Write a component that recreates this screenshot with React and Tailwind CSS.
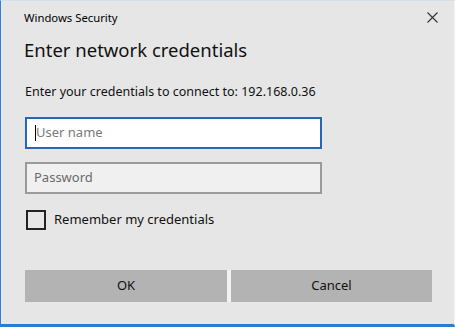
export default function App() {
  const font = { fontFamily: '"Noto Sans", "Open Sans", sans-serif' };
  return (
    <div
      className="w-[455px] h-[327px] bg-[#e6e6e6] border-l border-l-[#2f80d6] border-t border-t-[#cfe0f0] border-b-[3px] border-b-[#2b7bd2] border-r border-r-[#f4f4f4] flex flex-col text-[#1a1a1a]"
      style={font}
    >
      <div className="flex items-center justify-between h-[33px] pl-[23px] pr-[16px]">
        <span className="text-[11.3px] leading-none text-black">Windows Security</span>
        <svg width="11" height="11" viewBox="0 0 11 11" className="text-[#333]">
          <path d="M0.5 0.5 L10.5 10.5 M10.5 0.5 L0.5 10.5" stroke="currentColor" strokeWidth="1.1" fill="none" />
        </svg>
      </div>
      <div className="pl-[23px] text-[18.5px] leading-[30px] text-[#111] mt-[1px]">Enter network credentials</div>
      <div className="pl-[24px] mt-[18px] text-[12.5px] leading-[18px] text-[#111]">
        Enter your credentials to connect to: 192.168.0.36
      </div>
      <div className="pl-[24px] mt-[16px] flex flex-col">
        <div className="w-[297px] h-[32px] bg-white border-2 border-[#2a66b8] flex items-center pl-[8px]">
          <span className="w-[1px] h-[16px] bg-black"></span>
          <span className="text-[13px] text-[#7a7a7a]">User name</span>
        </div>
        <div className="w-[297px] h-[32px] mt-[13px] bg-[#f0f0f0] border-2 border-[#9a9a9a] flex items-center pl-[7px]">
          <span className="text-[13px] text-[#6a6a6a]">Password</span>
        </div>
        <div className="flex items-center mt-[16px] pl-[1px]">
          <div className="w-[20px] h-[20px] border-2 border-[#222] bg-[#e6e6e6]"></div>
          <span className="ml-[8px] text-[13px] text-[#111]">Remember my credentials</span>
        </div>
      </div>
      <div className="pl-[24px] mt-[40px] flex">
        <div className="flex gap-[4px] bg-[#f2f2f2]">
          <button className="w-[202px] h-[32px] bg-[#b3b3b3] text-[13px] text-[#111]">OK</button>
          <button className="w-[201px] h-[32px] bg-[#b3b3b3] text-[13px] text-[#111]">Cancel</button>
        </div>
      </div>
    </div>
  );
}
